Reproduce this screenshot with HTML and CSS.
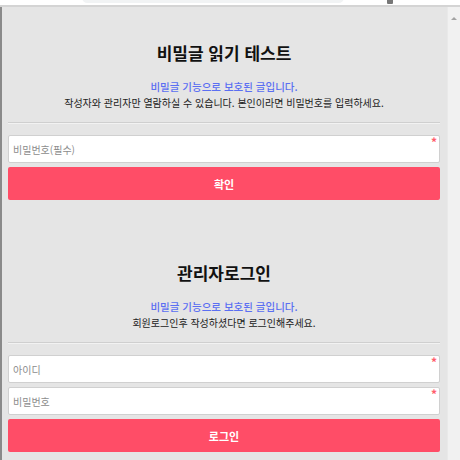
FILE: index.html
```html
<!DOCTYPE html>
<html lang="ko">
<head>
  <meta charset="UTF-8" />
  <title>비밀글 읽기 테스트</title>
  <link rel="stylesheet" href="styles.css">
</head>
<body>

<div class="topbar">
  <div class="urlbar"></div>
  <div class="ext"></div>
</div>

<div class="window">
  <div class="page">

    <section class="box">
      <h2>비밀글 읽기 테스트</h2>
      <p class="notice">비밀글 기능으로 보호된 글입니다.</p>
      <p class="desc">작성자와 관리자만 열람하실 수 있습니다. 본인이라면 비밀번호를 입력하세요.</p>
      <hr>
      <div class="field">
        <input type="password" placeholder="비밀번호(필수)">
        <span class="req">*</span>
      </div>
      <button class="btn">확인</button>
    </section>

    <section class="box second">
      <h2>관리자로그인</h2>
      <p class="notice">비밀글 기능으로 보호된 글입니다.</p>
      <p class="desc">회원로그인후 작성하셨다면 로그인해주세요.</p>
      <hr>
      <div class="field">
        <input type="text" placeholder="아이디">
        <span class="req">*</span>
      </div>
      <div class="field">
        <input type="password" placeholder="비밀번호">
        <span class="req">*</span>
      </div>
      <button class="btn">로그인</button>
    </section>

  </div>
  <div class="scroll">
    <span class="arrow"></span>
  </div>
</div>

</body>
</html>
```

FILE: styles.css
```css
html, body {
  margin: 0;
  padding: 0;
  height: 100%;
  overflow: hidden;
}

body {
  font-family: "Noto Sans CJK KR", "Noto Sans", sans-serif;
  background-color: #ffffff;
  color: #222;
}

.topbar {
  position: relative;
  height: 5px;
  background: #ffffff;
  border-bottom: 2px solid #d4d4d4;
}

.urlbar {
  position: absolute;
  left: 82px;
  top: -8px;
  width: 262px;
  height: 11px;
  border-radius: 6px;
  background: #f1f3f4;
}

.ext {
  position: absolute;
  left: 387px;
  top: -2px;
  width: 6px;
  height: 6px;
  background: #777;
  border-radius: 1px;
}

.window {
  display: flex;
  height: calc(100% - 7px);
  border-left: 2px solid #8a8a8a;
}

.page {
  flex: 1;
  background: #e5e5e5;
  padding: 0 7px 0 6px;
}

.scroll {
  width: 13px;
  background: #f1f1f1;
  border-left: 1px solid #e9e9e9;
  display: flex;
  justify-content: center;
  padding-top: 10px;
  box-sizing: border-box;
}

.arrow {
  width: 0;
  height: 0;
  border-left: 3px solid transparent;
  border-right: 3px solid transparent;
  border-bottom: 3px solid #a3a3a3;
}

.box {
  padding-top: 32px;
}

.box.second {
  padding-top: 59px;
}

h2 {
  margin: 0 0 12px;
  text-align: center;
  font-size: 17px;
  line-height: 28px;
  font-weight: 700;
  color: #111;
}

.notice {
  margin: 0;
  text-align: center;
  font-size: 10.5px;
  line-height: 16px;
  font-weight: 500;
  color: #5b6ff2;
}

.desc {
  margin: 0;
  text-align: center;
  font-size: 10px;
  line-height: 15px;
  color: #222;
}

hr {
  margin: 12px 0 11px;
  border: none;
  border-top: 1px solid #cfcfcf;
  border-bottom: 1px solid #f2f2f2;
}

.field {
  position: relative;
  margin-bottom: 4px;
}

input {
  display: block;
  width: 100%;
  box-sizing: border-box;
  height: 28px;
  padding: 0 4px;
  border: 1px solid #d0d0d0;
  border-radius: 2px;
  background: #fff;
  font-family: inherit;
  font-size: 10px;
  color: #333;
}

input::placeholder {
  color: #8c8c8c;
}

.req {
  position: absolute;
  right: 3px;
  top: 1px;
  color: #ff5c6c;
  font-size: 12px;
  line-height: 12px;
  font-weight: 700;
}

.btn {
  display: block;
  width: 100%;
  height: 33px;
  border: none;
  border-radius: 2px;
  background: #ff4d67;
  color: #fff;
  font-family: inherit;
  font-size: 11px;
  font-weight: 700;
  cursor: pointer;
}
```
